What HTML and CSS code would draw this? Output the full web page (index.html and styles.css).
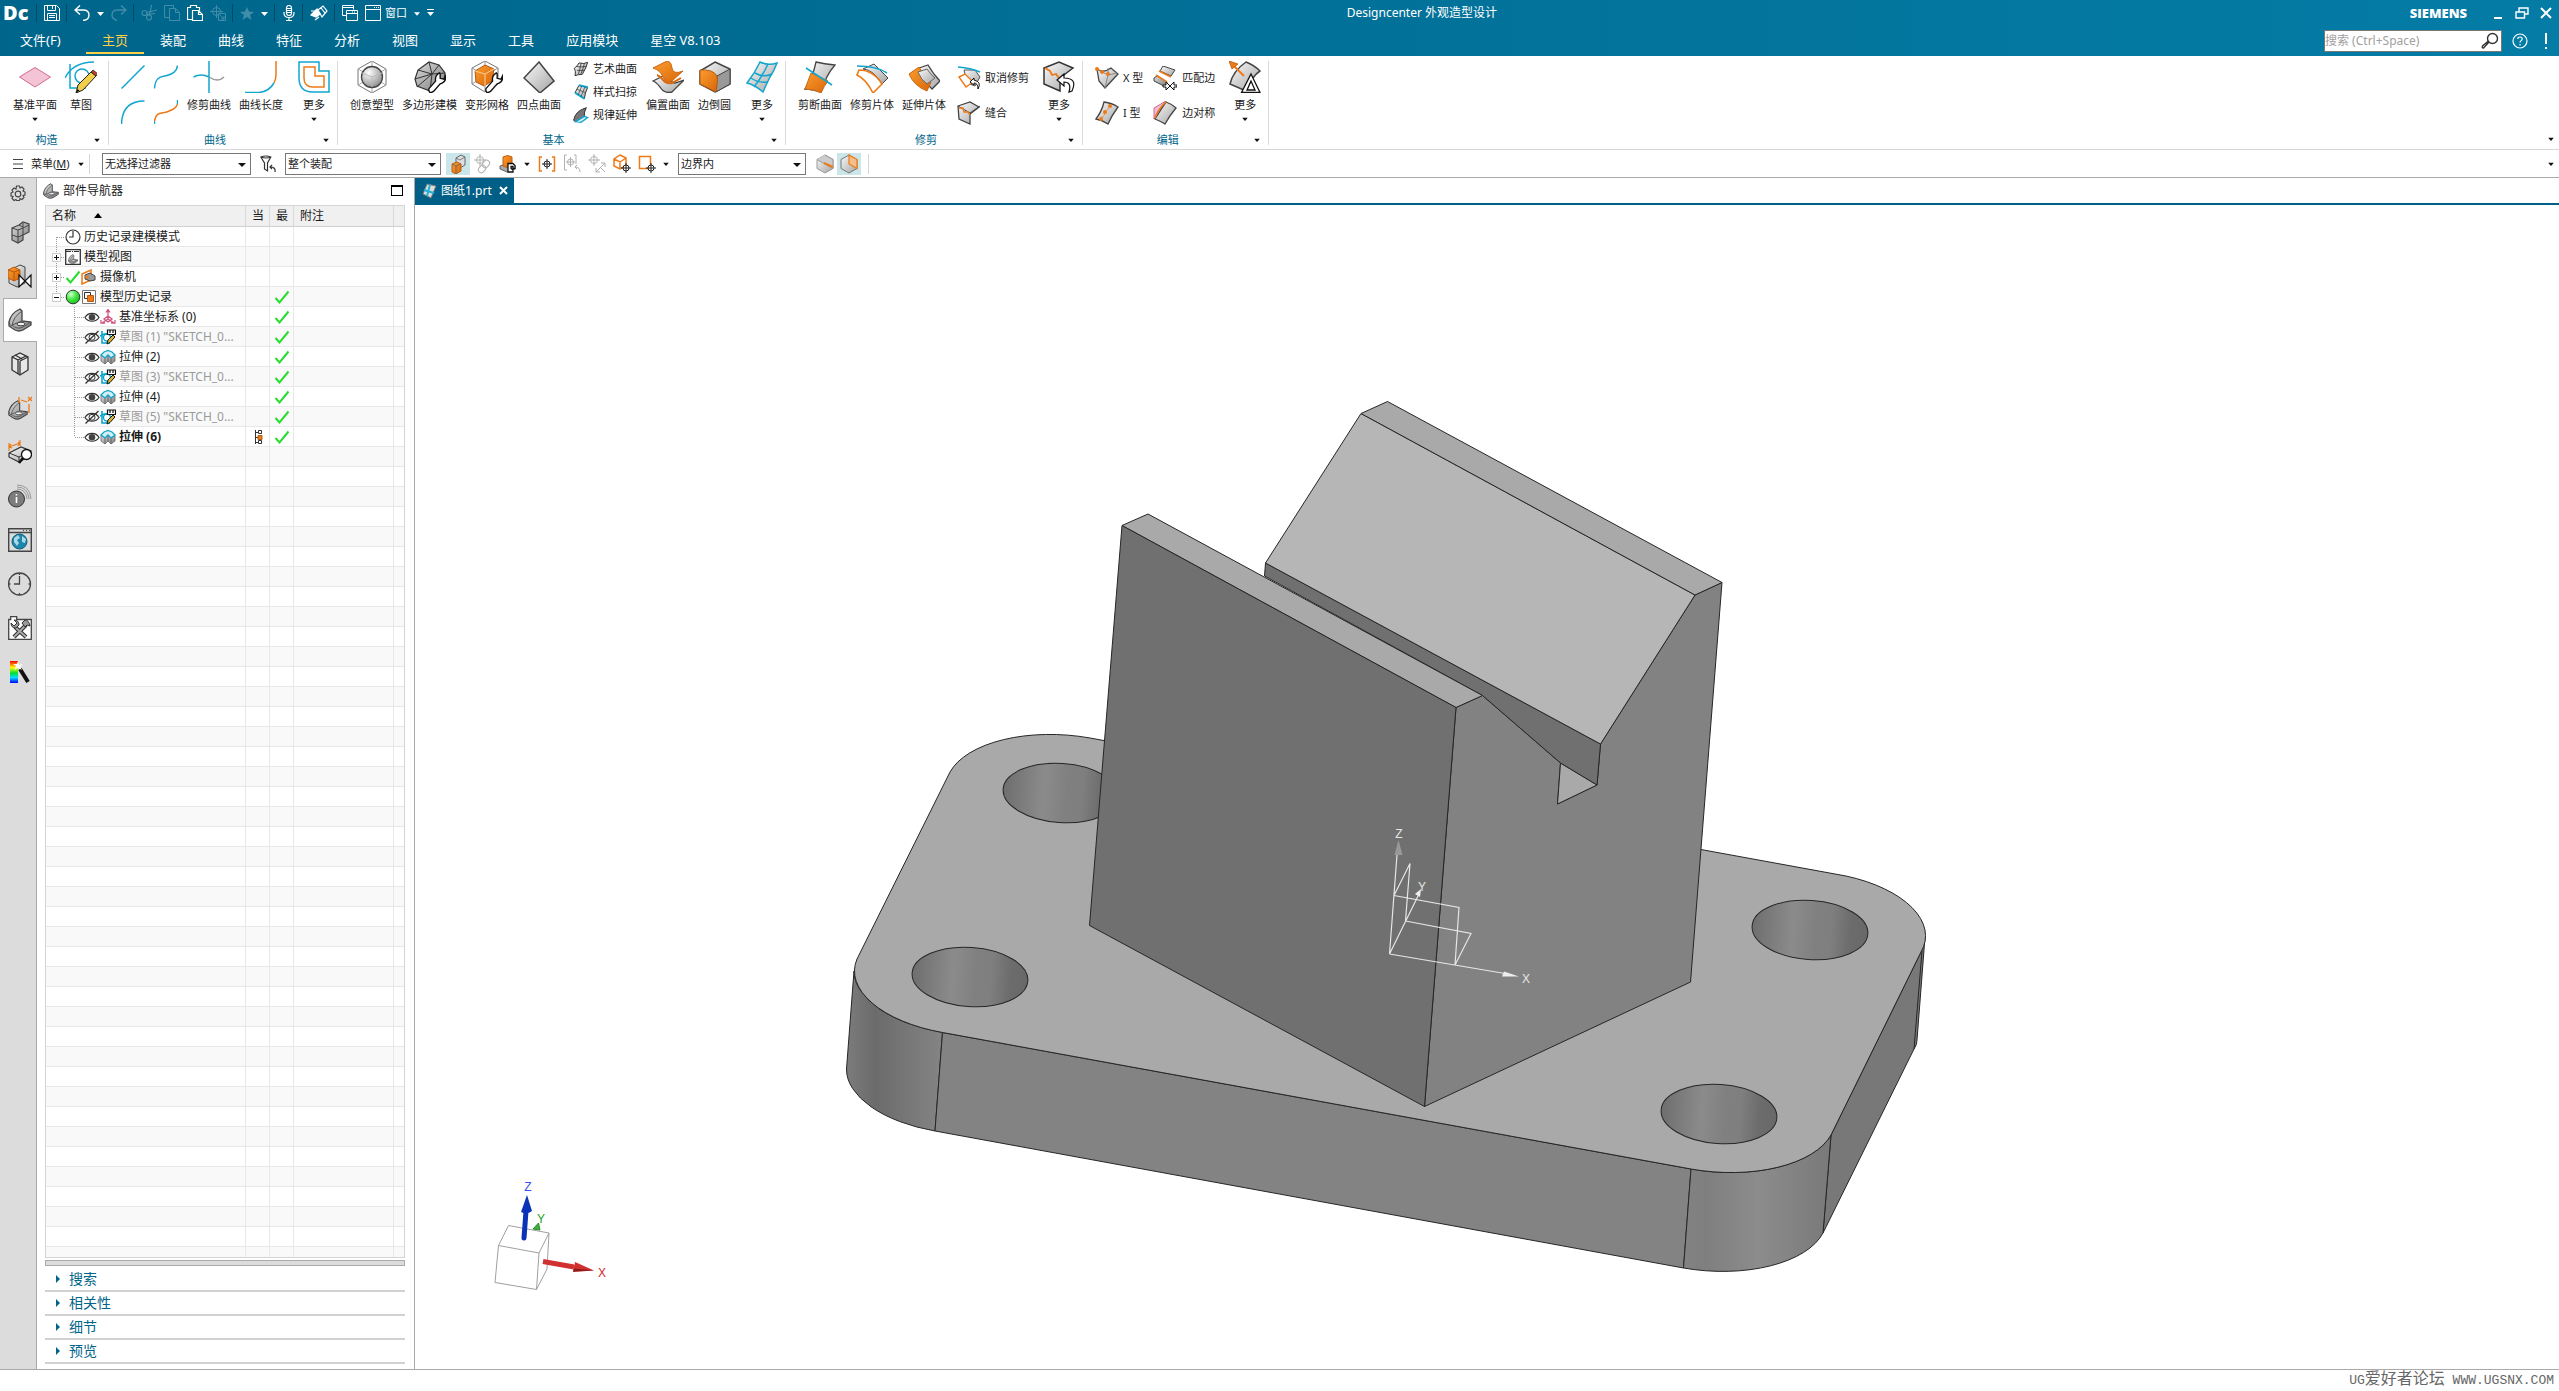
FILE: index.html
```html
<!DOCTYPE html>
<html lang="zh-CN">
<head>
<meta charset="utf-8">
<meta name="viewport" content="width=device-width, initial-scale=1">
<title>Designcenter 外观造型设计</title>
<link rel="stylesheet" href="styles.css">
</head>
<body>
<svg class="defs" width="0" height="0" aria-hidden="true">
  <defs>
    <linearGradient id="gray" x1="0" y1="0" x2="1" y2="1"><stop offset="0" stop-color="#fafafa"/><stop offset="1" stop-color="#a4a4a4"/></linearGradient>
    <linearGradient id="dark" x1="0" y1="0" x2="1" y2="1"><stop offset="0" stop-color="#dcdcdc"/><stop offset="1" stop-color="#7c7c7c"/></linearGradient>
    <linearGradient id="orange" x1="0" y1="0" x2="1" y2="1"><stop offset="0" stop-color="#fb9d2e"/><stop offset="1" stop-color="#d9660a"/></linearGradient>
    <radialGradient id="ball" cx=".35" cy=".3" r=".8"><stop offset="0" stop-color="#fff"/><stop offset="1" stop-color="#858585"/></radialGradient>
    <radialGradient id="green" cx=".35" cy=".3" r=".8"><stop offset="0" stop-color="#d4ffd4"/><stop offset=".5" stop-color="#3fe63f"/><stop offset="1" stop-color="#17b817"/></radialGradient>
    <linearGradient id="rainbow" x1="0" y1="0" x2="0" y2="1"><stop offset="0" stop-color="#f00"/><stop offset=".3" stop-color="#ff0"/><stop offset=".55" stop-color="#0d3"/><stop offset=".75" stop-color="#0df"/><stop offset="1" stop-color="#00f"/></linearGradient>
  </defs>
  <symbol id="caret" viewBox="0 0 7 5"><path d="M0 1h7L3.500 5z" fill="currentColor"/></symbol>
  <symbol id="check" viewBox="0 0 16 16"><path d="M1.500 9l4 4.500L14.500 2.500" fill="none" stroke="#27dd2d" stroke-width="2"/></symbol>
  <symbol id="eye" viewBox="0 0 16 16"><path d="M1 8.500C4 3 12 3 15 8.500C12 13.500 4 13.500 1 8.500z" fill="#fff" stroke="#333" stroke-width="1.200"/><circle cx="8" cy="8.300" r="3.300" fill="#444"/></symbol>
  <symbol id="eye-off" viewBox="0 0 16 16"><path d="M1 8.500C4 3 12 3 15 8.500C12 13.500 4 13.500 1 8.500z" fill="none" stroke="#333" stroke-width="1.200"/><circle cx="8" cy="8.300" r="3" fill="none" stroke="#333"/><path d="M1.500 14.500L14.500 2" stroke="#333" stroke-width="1.300"/></symbol>
  <symbol id="sketch" viewBox="0 0 16 16"><path d="M2 2v12h8M0 7q5-3 8-2" fill="none" stroke="#00a3cc" stroke-width="1.500"/><circle cx="7" cy="8.500" r="3.500" fill="none" stroke="#00a3cc" stroke-width="1.300"/><path d="M7.500 1h8v4.500h-8zM10 1v3M13 1v3" fill="#fff" stroke="#111" stroke-width="1.200"/><path d="M7 15l1-4 5-5 2 2-5 5.500z" fill="#d8b53a" stroke="#111"/></symbol>
  <symbol id="extrude" viewBox="0 0 16 16"><path d="M1 6l4 3 3-3 3 3 4-3v6l-4 3-3-3-3 3-4-3z" fill="url(#dark)" stroke="#666" stroke-width=".8"/><path d="M1 6l3-3 4-1.500L12 3l3 3-4 3-3-3-3 3z" fill="#d3eef4" stroke="#0fa5c8" stroke-width="1.300"/><path d="M5 9.500V15M11 9.500V15M8 7v5" stroke="#666"/></symbol>
  <symbol id="part" viewBox="0 0 24 24"><path d="M1 18V14Q3 5 12 1l2 2v10l9 1v3l-8 5q-4 2-8 0z" fill="url(#dark)" stroke="#444" stroke-width="1.300"/><path d="M1 14q0 3 3 4 1-9 10-15M4 17l10-4M4 17q5 5 11 2l8-5" fill="none" stroke="#555"/><ellipse cx="13" cy="16" rx="4" ry="1.800" fill="#f0f0f0" stroke="#444"/></symbol>
  <symbol id="node-plus" viewBox="0 0 18 20"><path d="M9.500 0v20M14 10.500h4" stroke="#999" stroke-dasharray="1 1"/><path d="M5.500 6.500h8v8h-8z" fill="#fff" stroke="#ccc"/><path d="M7 10.500h5M9.500 8v5" stroke="#111"/></symbol>
  <symbol id="node-minus" viewBox="0 0 18 20"><path d="M9.500 0v6M14 10.500h4" stroke="#999" stroke-dasharray="1 1"/><path d="M5.500 6.500h8v8h-8z" fill="#fff" stroke="#ccc"/><path d="M7 10.500h5" stroke="#111"/></symbol>
  <symbol id="branch" viewBox="0 0 10 20"><path d="M.5 0v20M1 10.500h9" stroke="#999" stroke-dasharray="1 1"/></symbol>
  <symbol id="branch-end" viewBox="0 0 10 20"><path d="M.5 0v10M1 10.500h9" stroke="#999" stroke-dasharray="1 1"/></symbol>
  <symbol id="wrench" viewBox="0 0 20 24"><path d="M2 19L9 11q-1-6 4-9l1 1v5l4 1 2-4q1 7-6 9l-7 8q-4 3-5 0-1-2 0-3z" fill="#fff" stroke="#111" stroke-width="1.500"/></symbol>
</svg>

<header class="app-header">
  <div class="title-row">
    <div class="quick">
      <span class="logo">Dc</span>
      <i class="sep"></i>
      <button aria-label="保存"><svg width="16" height="16" viewBox="0 0 16 16" fill="none" stroke="#fff"><path d="M.5.5h12l3 3v12h-15zM3.500.5v5h8v-5M8.500 1v3M3.500 15.500v-7h9v7M5 10.500h6M5 12.500h6"/></svg></button>
      <i class="sep"></i>
      <button aria-label="撤消"><svg width="16" height="16" viewBox="0 0 16 16" fill="none" stroke="#fff" stroke-width="1.400"><path d="M6 .5L1 5l5 4.500M1 5h8q6 0 6 5t-6 5.500"/></svg></button>
      <svg class="caret light" width="7" height="5"><use href="#caret"/></svg>
      <button aria-label="重做" class="dim"><svg width="16" height="16" viewBox="0 0 16 16" fill="none" stroke="#fff" stroke-width="1.400"><path d="M10 .5L15 5l-5 4.500M15 5H7q-6 0-6 5 0 4 5 5.500"/></svg></button>
      <i class="sep"></i>
      <button aria-label="剪切" class="dim"><svg width="16" height="16" viewBox="0 0 16 16" fill="none" stroke="#fff" stroke-width="1.200"><circle cx="3.500" cy="8" r="2.500"/><circle cx="8" cy="12.500" r="2.500"/><path d="M6 7.500l10-2.500M8.500 10l2-10M6 9.500l8-1"/></svg></button>
      <button aria-label="复制" class="dim"><svg width="16" height="16" viewBox="0 0 16 16" fill="none" stroke="#fff"><path d="M5.500 12.500h-5v-12h9v3M5.500 3.500h6l4 4v8h-10zM11.500 3.500v4h4"/></svg></button>
      <button aria-label="粘贴"><svg width="16" height="16" viewBox="0 0 16 16" fill="none" stroke="#fff" stroke-width="1.200"><path d="M5.500 14.500h-5v-12h3v-2h6v2h3v3M5.500 5.500h6l4 4v6h-10zM11.500 5.500v4h4"/></svg></button>
      <button aria-label="移动" class="dim"><svg width="16" height="16" viewBox="0 0 16 16" fill="none" stroke="#fff"><circle cx="6.500" cy="6.500" r="4"/><path d="M6.500 0v13M0 6.500h13M8.500 8.500h7v7h-7zM10 10l4 4v-3M14 14h-3"/></svg></button>
      <i class="sep"></i>
      <button aria-label="收藏" class="dim"><svg width="14" height="14" viewBox="0 0 14 14" fill="#fff"><path d="M7 1l2 4.500 5 .5-4 3 1.500 5L7 11l-4.500 3L4 9 0 6l5-.5z"/></svg></button>
      <svg class="caret light" width="7" height="5"><use href="#caret"/></svg>
      <i class="sep"></i>
      <button aria-label="语音"><svg width="14" height="16" viewBox="0 0 14 16" fill="none" stroke="#fff" stroke-width="1.200"><rect x="4.500" y=".5" width="5" height="10" rx="2.500"/><path d="M2 7v1q0 4.500 5 4.500T12 8V7M7 12.500V15M4 15.500h6M5 3.500h4M5 5.500h4M5 7.500h4"/></svg></button>
      <i class="sep"></i>
      <button aria-label="橡皮"><svg width="18" height="16" viewBox="0 0 18 16" fill="none" stroke="#fff" stroke-width="1.200"><path d="M8 5l5-4 4 5-5 6zM11 3l4 5M1 6h4M9 12l-4 3"/><path d="M1 10l6-6 3 5-4 3z" fill="#fff"/></svg></button>
      <i class="sep"></i>
      <button aria-label="切换窗口"><svg width="16" height="16" viewBox="0 0 16 16" fill="none" stroke="#fff"><path d="M4 10.500H.5v-10h11v4M.5 2.500h11M4.500 5.500h11v10h-11zM4.500 8.500h11"/><path d="M10 7h4" stroke-dasharray="1 1"/></svg></button>
      <button class="win-menu"><svg width="16" height="16" viewBox="0 0 16 16" fill="none" stroke="#fff"><path d="M.5.500h15v15h-15zM.5 4.500h15"/><path d="M9 2.500h5" stroke-dasharray="1 1"/></svg><span>窗口</span></button>
      <svg class="caret light" width="6" height="5"><use href="#caret"/></svg>
      <svg class="caret light" width="7" height="8" viewBox="0 0 7 8"><path d="M0 .5h7" stroke="#fff"/><path d="M0 3h7L3.500 7z" fill="#fff"/></svg>
    </div>
    <h1 class="doc-title">Designcenter 外观造型设计</h1>
    <div class="window-side">
      <strong class="brand">SIEMENS</strong>
      <div class="window-buttons">
        <button aria-label="最小化"><svg width="14" height="14" viewBox="0 0 14 14"><path d="M3 12h8" stroke="#fff" stroke-width="2"/></svg></button>
        <button aria-label="还原"><svg width="14" height="14" viewBox="0 0 14 14" fill="none" stroke="#fff" stroke-width="1.400"><path d="M4 6V2h9v6h-3M1 6h8.500v6H1z"/></svg></button>
        <button aria-label="关闭"><svg width="14" height="14" viewBox="0 0 14 14"><path d="M2 2l10 10M12 2L2 12" stroke="#fff" stroke-width="2"/></svg></button>
      </div>
    </div>
  </div>
  <div class="tab-row">
    <nav class="tabs">
      <a href="#" class="file">文件(F)</a><a href="#" class="active">主页</a><a href="#">装配</a><a href="#">曲线</a><a href="#">特征</a><a href="#">分析</a><a href="#">视图</a><a href="#">显示</a><a href="#">工具</a><a href="#">应用模块</a><a href="#">星空 V8.103</a>
    </nav>
    <div class="search-side">
      <div class="search">
        <input type="text" aria-label="搜索" placeholder="搜索 (Ctrl+Space)">
        <svg width="18" height="18" viewBox="0 0 18 18" fill="none" stroke="#333" stroke-width="1.400"><circle cx="11.500" cy="6.500" r="5"/><path d="M8 10l-5.500 6q-2 0-1-2L7.500 9" /></svg>
      </div>
      <button aria-label="帮助"><svg width="16" height="16" viewBox="0 0 16 16" fill="none" stroke="#fff" stroke-width="1.200"><circle cx="8" cy="8" r="7"/><path d="M5.800 6q0-2 2.200-2t2.200 2q0 1.200-1.200 1.800-1 .5-1 1.800M8 11v1.400"/></svg></button>
      <button aria-label="提醒"><svg width="16" height="18" viewBox="0 0 16 18"><path d="M8 1v11M8 15v2" stroke="#fff" stroke-width="2"/></svg></button>
    </div>
  </div>
</header>

<section class="ribbon" aria-label="主页">
  <div class="group g-build">
    <div class="items">
      <button class="big"><svg width="32" height="32" viewBox="0 0 32 32"><path d="M.5 16L16 6.500L31.500 16L16 26z" fill="#f5c3d6" stroke="#cf6c8e"/></svg><span>基准平面</span><svg class="caret" width="6" height="4"><use href="#caret"/></svg></button>
      <button class="big short"><svg width="32" height="32" viewBox="0 0 32 32"><g fill="none" stroke="#12a6cf" stroke-width="1.500"><path d="M5 3v24h16M0 17Q8 1 29 1"/><circle cx="17" cy="15" r="7"/></g><path d="M11 32l2-8L26 11l5 4-13 14z" fill="#f2cf4a" stroke="#222"/><path d="M26 11l2-2 5 4-2 2z" fill="#c63b2b" stroke="#222" stroke-width=".8"/><path d="M11 32l1.500-4 2 1.500z" fill="#111"/></svg><span>草图</span></button>
    </div>
    <footer><span>构造</span><svg class="caret" width="6" height="4"><use href="#caret"/></svg></footer>
  </div>
  <div class="group g-curve">
    <div class="items">
      <div class="curves">
        <button aria-label="直线"><svg width="24" height="24" viewBox="0 0 24 24"><path d="M.5 23.500l23-23" stroke="#12a6cf" stroke-width="1.500"/></svg></button>
        <button aria-label="样条"><svg width="24" height="24" viewBox="0 0 24 24"><path d="M.5 23.500C1 11 8 12 13 10.500S23 7 23.500.5" fill="none" stroke="#12a6cf" stroke-width="1.500"/></svg></button>
        <button aria-label="圆弧"><svg width="24" height="24" viewBox="0 0 24 24"><path d="M.5 24Q1 1 23.500 1" fill="none" stroke="#12a6cf" stroke-width="1.500"/></svg></button>
        <button aria-label="桥接"><svg width="24" height="24" viewBox="0 0 24 24" fill="none" stroke="#12a6cf" stroke-width="1.500"><path d="M.5 24V21M23.500 0v4"/><path d="M.5 21C2 11 8 14 14 11.500S22 8 23.500 4" stroke="#ee7a17"/></svg></button>
      </div>
      <button class="big"><svg width="32" height="32" viewBox="0 0 32 32" fill="none" stroke-width="1.500"><path d="M16 0v32M.5 16Q8 12 16 16" stroke="#12a6cf"/><path d="M16 16q9 6 15 0" stroke="#999"/></svg><span>修剪曲线</span></button>
      <button class="big"><svg width="32" height="32" viewBox="0 0 32 32" fill="none" stroke-width="1.500"><path d="M31 0v14q0 4-2 8" stroke="#ee7a17"/><path d="M0 31.500h14q10-1 15-9.500" stroke="#12a6cf"/></svg><span>曲线长度</span></button>
      <button class="big more"><svg width="32" height="32" viewBox="0 0 32 32" fill="none" stroke-width="1.500"><path d="M1 1h20v9h10v21H15Q1 31 1 17z" stroke="#12a6cf"/><path d="M6 6h11v9h9v11H15q-9 0-9-9z" stroke="#ee7a17"/></svg><span>更多</span><svg class="caret" width="6" height="4"><use href="#caret"/></svg></button>
    </div>
    <footer><span>曲线</span><svg class="caret" width="6" height="4"><use href="#caret"/></svg></footer>
  </div>
  <div class="group g-base">
    <div class="items">
      <button class="big"><svg width="32" height="32" viewBox="0 0 32 32"><path d="M16 0l14 8v16l-14 8-14-8V8z" fill="#fff" stroke="#777"/><path d="M16 0v32M2 8l28 16M30 8L2 24" stroke="#aaa"/><circle cx="16" cy="16" r="10.500" fill="url(#ball)" stroke="#444" stroke-width="1.300"/><path d="M6 12l10 4 10-4M16 16v10" fill="none" stroke="#bbb"/></svg><span>创意塑型</span></button>
      <button class="big"><svg width="32" height="32" viewBox="0 0 32 32"><path d="M1 18L4 9 15 1l10 3 6 8-1 8-14 10-13-5z" fill="url(#dark)" stroke="#333" stroke-width="1.200"/><path d="M4 9l14 4L15 1M18 13L1 18M18 13L3 26M18 13l13-1M18 13l7-9M18 13l-2 17" fill="none" stroke="#333"/><svg x="13" y="10" width="19" height="22"><use href="#wrench"/></svg></svg><span>多边形建模</span></button>
      <button class="big"><svg width="32" height="32" viewBox="0 0 32 32"><path d="M14 0l13 7v16l-13 8-13-8V7z" fill="#fff" stroke="#777"/><path d="M14 0v31M1 7l26 16M27 7L1 23" stroke="#999"/><path d="M4 10l10-6 9 4-2 12-8 5-8-4z" fill="url(#orange)" stroke="#b65a10"/><path d="M4 10l10 3 9-5M14 13v12" fill="none" stroke="#ffd09a"/><svg x="13" y="10" width="19" height="22"><use href="#wrench"/></svg></svg><span>变形网格</span></button>
      <button class="big"><svg width="32" height="32" viewBox="0 0 32 32"><path d="M16 1l15 19-14 12L1 17z" fill="url(#gray)" stroke="#444" stroke-width="1.500"/></svg><span>四点曲面</span></button>
      <div class="list three">
        <button><svg width="16" height="16" viewBox="0 0 24 24"><path d="M2 11Q8 6 9 3q8 2 13-1-2 8-8 18-6 0-11 2 2-6-1-11z" fill="url(#gray)" stroke="#333" stroke-width="1.500"/><path d="M5 8q6 2 15 0M6 14l11 0M12 4Q10 14 8 20M17 4q-2 8-5 15" fill="none" stroke="#333" stroke-width="1.200"/></svg><span>艺术曲面</span></button>
        <button><svg width="16" height="16" viewBox="0 0 24 24"><path d="M3 13L9 2l13 3q-4 8-5 17l-14-9z" fill="url(#gray)" stroke="#333" stroke-width="1.500"/><path d="M9 2l13 3M3 13l14 9" stroke="#12a6cf" stroke-width="3"/><path d="M6 8l13 5M13 3L8 16M18 4l-6 15" stroke="#333"/></svg><span>样式扫掠</span></button>
        <button><svg width="16" height="16" viewBox="0 0 24 24"><path d="M1 20Q3 6 20 1q-4 7-3 13L4 22z" fill="#777" stroke="#333" stroke-width="1.500"/><path d="M4 22l13-8 5 2-10 7z" fill="#d5f0f7" stroke="#12a6cf" stroke-width="2"/></svg><span>规律延伸</span></button>
      </div>
      <button class="big"><svg width="32" height="32" viewBox="0 0 32 32"><path d="M1 20l12-6q6 8 10 8l9-3-12 12q-8 2-12-5-4-5-7-6z" fill="url(#gray)" stroke="#444" stroke-width="1.300"/><path d="M1 7L15 0q4 0 5 7t11 3L20 20q-6 3-9-4T1 7z" fill="url(#orange)" stroke="#c96a14"/><path d="M5 14q3 1 6 5t9 3l9-5" fill="none" stroke="#d9660a" stroke-width="2"/></svg><span>偏置曲面</span></button>
      <button class="big"><svg width="32" height="32" viewBox="0 0 32 32"><path d="M16 1l15 7v15l-15 8-15-8V10z" fill="url(#gray)" stroke="#444" stroke-width="1.500"/><path d="M18 15l13-7v15l-14 8z" fill="#999" stroke="#444"/><path d="M1 9q13-1 17 6 1 5-1 16L1 23z" fill="url(#orange)" stroke="#b65a10"/></svg><span>边倒圆</span></button>
      <button class="big more"><svg width="32" height="32" viewBox="0 0 32 32"><path d="M14 1q8 4 17 1-3 8-7 14-4 8-7 15Q9 24 1 22 9 12 14 1z" fill="url(#gray)" stroke="#12a6cf" stroke-width="1.500"/><path d="M22 3Q16 16 8 26M9 12q8 5 17 1M5 17q7 5 17 4" fill="none" stroke="#12a6cf" stroke-width="1.500"/></svg><span>更多</span><svg class="caret" width="6" height="4"><use href="#caret"/></svg></button>
    </div>
    <footer><span>基本</span><svg class="caret" width="6" height="4"><use href="#caret"/></svg></footer>
  </div>
  <div class="group g-trim">
    <div class="items">
      <button class="big"><svg width="32" height="32" viewBox="0 0 32 32"><path d="M12 1q8 2 19 3-9 10-14 27Q8 28 1 28 9 16 12 1z" fill="url(#gray)" stroke="#444" stroke-width="1.300"/><path d="M7 12l17 8q-4 5-7 12-7-4-16-4z" fill="url(#orange)" stroke="#c96a14"/><path d="M2 7l26 17" stroke="#12a6cf" stroke-width="1.500"/></svg><span>剪断曲面</span></button>
      <button class="big"><svg width="32" height="32" viewBox="0 0 32 32"><path d="M18 3l14 14-6 6Q18 9 7 8z" fill="url(#gray)" stroke="#444"/><path d="M3 9q14 0 23 14l-9 9Q10 18 1 14z" fill="#fff" stroke="#ee7a17" stroke-width="1.600"/><path d="M1 5q20 0 30 7" fill="none" stroke="#12a6cf" stroke-width="1.600"/></svg><span>修剪片体</span></button>
      <button class="big"><svg width="32" height="32" viewBox="0 0 32 32"><path d="M11 7l9-3q6 10 12 16l-8 8q-9-8-13-21z" fill="url(#gray)" stroke="#444" stroke-width="1.300"/><path d="M1 13l10-7q4 9 12 15l-4 9Q6 25 1 13z" fill="url(#orange)" stroke="#c96a14"/><path d="M10 11l9-3q4 6 8 9l-8 6q-6-4-9-12z" fill="url(#gray)" stroke="#666"/></svg><span>延伸片体</span></button>
      <div class="list two">
        <button><svg width="24" height="24" viewBox="0 0 24 24"><path d="M7 4l11 0 5 7-5 9-8-3z" fill="url(#gray)" stroke="#555"/><path d="M2 11l6-3 8 8-7 5z" fill="#fff" stroke="#ee7a17" stroke-width="1.400"/><path d="M1 1q13 1 22 5" fill="none" stroke="#12a6cf" stroke-width="1.600"/><path d="M17 12l-4 4 4 3v-2q4 0 4 6 4-7-4-9z" fill="#fff" stroke="#111"/></svg><span>取消修剪</span></button>
        <button><svg width="24" height="24" viewBox="0 0 24 24"><path d="M1 5l12-4 9 5-9 7v10L2 18z" fill="url(#gray)" stroke="#444" stroke-width="1.300"/><path d="M1 5l12 7 10-7" fill="none" stroke="#444"/><path d="M2 7l4 0 1 4 4 0 2 3" fill="none" stroke="#ee7a17" stroke-width="1.500"/></svg><span>缝合</span></button>
      </div>
      <button class="big more"><svg width="32" height="32" viewBox="0 0 32 32"><path d="M1 7l15-6 14 6-13 10v13L1 23z" fill="url(#gray)" stroke="#333" stroke-width="1.500"/><path d="M2 7l5 3 2 4 4-1 3 4" fill="none" stroke="#ee7a17" stroke-width="1.800"/><path d="M21 13l-7 6 7 6v-4q8 0 5 10l3-1q6-13-8-13z" fill="#fff" stroke="#111" stroke-width="1.200"/></svg><span>更多</span><svg class="caret" width="6" height="4"><use href="#caret"/></svg></button>
    </div>
    <footer><span>修剪</span><svg class="caret" width="6" height="4"><use href="#caret"/></svg></footer>
  </div>
  <div class="group g-edit">
    <div class="items">
      <div class="list two">
        <button><svg width="24" height="24" viewBox="0 0 24 24"><path d="M2 3q6 5 14-1l7 6-13 14L4 15z" fill="url(#gray)" stroke="#444" stroke-width="1.300"/><path d="M2 3l11 6V2M13 9l9-2M13 9l-3 13" fill="none" stroke="#888"/><g fill="#ee7a17"><circle cx="2" cy="3" r="2"/><circle cx="7" cy="6" r="2"/><circle cx="13" cy="8" r="2"/></g></svg><span>X 型</span></button>
        <button><svg width="24" height="24" viewBox="0 0 24 24"><path d="M9 1q8 1 14 5-6 8-10 17Q7 19 1 18 7 10 9 1z" fill="url(#gray)" stroke="#444" stroke-width="1.300"/><path d="M15 5L7 17" stroke="#ee7a17" stroke-dasharray="2 1"/><g fill="#ee7a17"><circle cx="15" cy="5" r="2"/><circle cx="10" cy="11" r="2"/><circle cx="6" cy="18" r="2"/></g></svg><span>I 型</span></button>
      </div>
      <div class="list two wide">
        <button><svg width="24" height="24" viewBox="0 0 24 24"><path d="M10 0l12 4-4 6-11-5z" fill="url(#gray)" stroke="#444"/><path d="M1 12l3-2 10 6-1 5-12-6z" fill="url(#dark)" stroke="#444"/><path d="M6 5l12 6M3 9l11 7" stroke="#ee7a17" stroke-width="1.600"/><path d="M10 19h3v-3l4 4-4 4v-3h-3zM24 19h-3v-3l-4 4 4 4v-3h3z" fill="#fff" stroke="#111"/></svg><span>匹配边</span></button>
        <button><svg width="24" height="24" viewBox="0 0 24 24"><path d="M1 7L13 0 5 10 1 18z" fill="#f5b9d0" stroke="#cf6c8e"/><path d="M13 1q6 2 10 6-6 7-11 16-5-3-10-5Q8 8 13 1z" fill="url(#gray)" stroke="#444" stroke-width="1.300"/><path d="M13 1Q6 7 2 17" fill="none" stroke="#ee7a17" stroke-width="1.600"/></svg><span>边对称</span></button>
      </div>
      <button class="big more"><svg width="32" height="32" viewBox="0 0 32 32"><path d="M17 1q8 3 14 9-8 5-14 20Q8 26 1 23 4 10 17 1z" fill="url(#gray)" stroke="#444" stroke-width="1.500"/><path d="M15 15L5 5" stroke="#ee7a17" stroke-width="2"/><path d="M0 0l9 3-6 5z" fill="#ee7a17" stroke="#b65a10" stroke-width=".8"/><path d="M22 13l9 18.500H12.500zM22 20l-4 9h8z" fill="#fff" stroke="#111" stroke-width="1.300"/></svg><span>更多</span><svg class="caret" width="6" height="4"><use href="#caret"/></svg></button>
    </div>
    <footer><span>编辑</span><svg class="caret" width="6" height="4"><use href="#caret"/></svg></footer>
  </div>
  <svg class="caret ribbon-end" width="6" height="4"><use href="#caret"/></svg>
</section>

<div class="toolbar">
  <button class="menu"><svg width="10" height="12" viewBox="0 0 10 12"><path d="M0 1.500h10M0 6h10M0 10.500h10" stroke="#444"/></svg><span>菜单(<u>M</u>)</span><svg class="caret" width="6" height="4"><use href="#caret"/></svg></button>
  <i class="vsep"></i>
  <span class="select s1"><select aria-label="类型过滤器"><option>无选择过滤器</option></select></span>
  <button class="funnel" aria-label="重置过滤器"><svg width="16" height="18" viewBox="0 0 16 18" fill="none" stroke="#333" stroke-width="1.200"><path d="M.8 2q5-2 10 0L7.500 8v8l-3-2V8zM1 2q5 2 10 0M15 17q1-5-5-5M12 10l-2 2 2 2"/></svg></button>
  <span class="select s2"><select aria-label="选择范围"><option>整个装配</option></select></span>
  <button class="tool on first" aria-label="常规选择"><svg width="18" height="20" viewBox="0 0 18 20"><path d="M7 4l5-3 4 2v8l-5 3-4-2z" fill="#ddd" stroke="#666"/><path d="M3 10l5-2 4 2v7l-5 3-4-2z" fill="url(#orange)" stroke="#c05f10"/><path d="M3 10l4 2 5-2M7 12v8M7 4l4 2 5-3" fill="none" stroke="#666" stroke-width=".8"/></svg></button>
  <button class="tool off" aria-label="链接"><svg width="18" height="20" viewBox="0 0 18 20" fill="none" stroke="#555"><circle cx="6" cy="6" r="3.500"/><path d="M6 0v12M0 6h12"/><rect x="9" y="6" width="6" height="8" rx="3" transform="rotate(40 12 10)"/><rect x="5" y="11" width="6" height="8" rx="3" transform="rotate(40 8 15)"/></svg></button>
  <button class="tool" aria-label="高亮"><svg width="18" height="20" viewBox="0 0 18 20"><path d="M1 12l8-3 7 3v3l-8 3-7-3z" fill="#aaa" stroke="#666"/><path d="M4 3q5-3 9 0v9q-5 3-9 0z" fill="url(#orange)" stroke="#c05f10"/><path d="M9 9.500h5l2 2v3h-2v-2h-2v2l2 1.500v2H9z" fill="#fff" stroke="#111" stroke-width="1.300"/></svg></button>
  <svg class="caret" width="6" height="4"><use href="#caret"/></svg>
  <button class="tool" aria-label="捕捉"><svg width="18" height="20" viewBox="0 0 18 20" fill="none"><path d="M4 3H1.500v14H4M14 3h2.500v14H14" stroke="#ee7a17" stroke-width="1.500"/><g stroke="#222"><circle cx="9" cy="10" r="3"/><path d="M9 5v10M4 10h10"/></g></svg></button>
  <button class="tool off" aria-label="重置捕捉"><svg width="18" height="20" viewBox="0 0 18 20" fill="none" stroke="#555"><path d="M4 1H1.500v15H4M11 1h2v9M17 18q0-5-5-5l2-2M12 13l2 2"/><circle cx="7.500" cy="8" r="3"/><path d="M7.500 3v10M3 8h9"/></svg></button>
  <button class="tool off" aria-label="移动"><svg width="18" height="20" viewBox="0 0 18 20" fill="none" stroke="#555"><circle cx="6" cy="6" r="3.500"/><path d="M6 0v12M0 6h12M8 18l9-9M17 13V9h-4M8 14v4h4M12 13l5 5"/></svg></button>
  <button class="tool" aria-label="体"><svg width="18" height="20" viewBox="0 0 18 20" fill="none"><path d="M7 1l6 3v7l-6 4-6-3V5zM1 5l6 3 6-4M7 8v7" stroke="#ee7a17" stroke-width="1.500"/><g stroke="#222"><circle cx="13" cy="14" r="3" fill="#fff"/><path d="M13 9v10M8 14h10"/></g></svg></button>
  <button class="tool" aria-label="矩形"><svg width="18" height="20" viewBox="0 0 18 20" fill="none"><path d="M1.500 2.500h11v12h-11z" stroke="#ee7a17" stroke-width="1.500"/><g stroke="#222"><circle cx="13" cy="14" r="3" fill="#fff"/><path d="M13 9v10M8 14h10"/></g></svg></button>
  <svg class="caret" width="6" height="4"><use href="#caret"/></svg>
  <span class="select s3"><select aria-label="选择边界"><option>边界内</option></select></span>
  <button class="tool" aria-label="着色"><svg width="18" height="20" viewBox="0 0 18 20"><path d="M9 1l8 4.500v9L9 19l-8-4.500v-9z" fill="url(#gray)" stroke="#999"/><path d="M9 1l8 4.500v9L9 10 1 5.500" fill="#ccc" stroke="#999"/><path d="M8 9l9 4" stroke="#ee7a17" stroke-width="2"/></svg></button>
  <button class="tool on" aria-label="透明"><svg width="18" height="20" viewBox="0 0 18 20"><path d="M9 1l8 4.500v9L9 19l-8-4.500v-9z" fill="url(#gray)" stroke="#777"/><path d="M9 1l8 4.500v9L9 10z" fill="#f3bd8c" stroke="#ee7a17" stroke-width="1.200"/></svg></button>
  <i class="vsep end"></i>
  <svg class="caret last" width="6" height="4"><use href="#caret"/></svg>
</div>

<main class="workspace">
  <nav class="rail" aria-label="资源条">
    <button class="gear" aria-label="设置"><svg width="18" height="18" viewBox="0 0 18 18" fill="none" stroke="#444" stroke-width="1.200"><path d="M7.500 1h3l.5 2 2-1 2 2-1 2 2 1v3l-2 .5 1 2-2 2-2-1-.5 2h-3L7 14.500l-2 1-2-2 1-2-2-.5V8l2-1-1-2 2-2 2 1z"/><circle cx="9" cy="9" r="2.800"/></svg></button>
    <button aria-label="装配导航器"><svg width="24" height="24" viewBox="0 0 24 24"><path d="M4 8l7-3 4-3 6 2v8l-6 3v5l-5 3-6-3z" fill="url(#dark)" stroke="#444" stroke-width="1.200"/><path d="M4 8l6 2 5-2V3M10 10v13M15 8l6-3M4 15l6 2 5-2V8M11 5l4 2" fill="none" stroke="#444"/></svg></button>
    <button aria-label="约束导航器"><svg width="24" height="24" viewBox="0 0 24 24"><path d="M6 4l6-3 5 2v16l-8 4-8-4V8z" fill="url(#gray)" stroke="#444"/><path d="M0 6l6-3 6 3v8l-6 3-6-3z" fill="url(#orange)" stroke="#b65a10"/><path d="M0 6l6 2 6-2M6 8v9" fill="none" stroke="#b65a10"/><path d="M11 11l12 12V11L11 23z" fill="#fff" stroke="#111" stroke-width="1.200"/></svg></button>
    <button class="current" aria-label="部件导航器"><svg width="24" height="24"><use href="#part"/></svg></button>
    <button aria-label="重用库"><svg width="24" height="24" viewBox="0 0 24 24"><path d="M4 5l8-4 8 4v13l-8 5-8-5z" fill="#e8e8e8" stroke="#333" stroke-width="1.300"/><path d="M4 5l6 3v14M10 8l8-4M12 9v13M12 9l8-4M7 3l7 4" fill="none" stroke="#333" stroke-width="1.300"/></svg></button>
    <button aria-label="MBD 导航器"><svg width="24" height="24" viewBox="0 0 24 24"><svg y="4" width="20" height="20"><use href="#part"/></svg><path d="M11 1v6M13 4l6 2M20 1l4 4M24 1l-4 4M21 8v9" stroke="#ee7a17" stroke-width="1.300"/></svg></button>
    <button aria-label="视图导航"><svg width="24" height="24" viewBox="0 0 24 24"><path d="M1 13l12-6 10 4v4l-12 7-10-5z" fill="url(#gray)" stroke="#333" stroke-width="1.200"/><path d="M1 13l10 4 12-6M11 17v5" fill="none" stroke="#333"/><path d="M1 3v8M12 0v6M1 7l11-4M3 4L1 7l3 1M10 2l2 1-2 3" fill="none" stroke="#ee7a17" stroke-width="1.200"/><circle cx="18.500" cy="14.500" r="5" fill="#fff" stroke="#111" stroke-width="1.300"/><path d="M15 18l-4 5" stroke="#111" stroke-width="2.500"/></svg></button>
    <button aria-label="通知"><svg width="24" height="24" viewBox="0 0 24 24"><circle cx="8.500" cy="15" r="8" fill="#7c7c7c" stroke="#333"/><path d="M8.500 13v6M8.500 10v1.500" stroke="#fff" stroke-width="1.600"/><path d="M9 5q9 0 10 10M9 3q11 0 12 12M9 1q13 0 14 14" fill="none" stroke="#999"/></svg></button>
    <button aria-label="浏览器"><svg width="24" height="24" viewBox="0 0 24 24"><path d="M.7.700h22.600v22.600H.700zM.7 4.500h22.600" fill="none" stroke="#444" stroke-width="1.400"/><path d="M15 2.500h7" stroke="#444" stroke-dasharray="1 2"/><circle cx="11.500" cy="13.500" r="7.500" fill="#1d86ab" stroke="#0f5d78"/><path d="M6 10l4-3 2 3-3 2 2 3-2 3-3-4zM14 8l4 3-1 4-3-1z" fill="#a9d8e6"/></svg></button>
    <button aria-label="历史记录"><svg width="24" height="24" viewBox="0 0 24 24" fill="none" stroke="#444" stroke-width="1.300"><circle cx="11.500" cy="12" r="11"/><path d="M11.500 4v8H6M11.500 1v2M11.500 21v2M.5 12h2M20.500 12h2"/></svg></button>
    <button aria-label="工具"><svg width="24" height="24" viewBox="0 0 24 24"><path d="M.7 3.500h2v-3h6v3h14.600v20H.700z" fill="#fff" stroke="#444" stroke-width="1.300"/><path d="M6 21L18 9M18 21L7 11" stroke="#333" stroke-width="4"/><path d="M6 21L18 9M18 21L7 11" stroke="#aaa" stroke-width="1.800"/><path d="M3 7l3 3 3-3-3-3q5 0 5 5l-3 3q-5 0-5-5zM14 7l3-3q4 0 5 6l-3-1-2 2z" fill="#999" stroke="#333"/></svg></button>
    <button aria-label="角色"><svg width="24" height="24" viewBox="0 0 24 24"><path d="M2 1h8v22H2z" fill="url(#rainbow)"/><path d="M12 9l8 13" stroke="#111" stroke-width="4"/><path d="M10 1l1 4 4-1-3 3 2 3-4-2-4 2 2-4-3-2h4z" fill="#fff"/></svg></button>
  </nav>

  <aside class="panel">
    <header class="panel-title"><svg width="16" height="16"><use href="#part"/></svg><h2>部件导航器</h2><button aria-label="最大化"></button></header>
    <div class="tree">
      <table>
        <colgroup><col class="c-name"><col class="c-mark"><col class="c-mark"><col class="c-note"><col></colgroup>
        <thead><tr><th>名称<svg class="sort" width="8" height="5" viewBox="0 0 8 5"><path d="M0 5h8L4 0z"/></svg></th><th>当</th><th>最</th><th>附注</th><th></th></tr></thead>
        <tbody>
          <tr><td><div class="node"><svg width="18" height="20" viewBox="0 0 18 20"><path d="M9.500 10v10M10 10.500h8" stroke="#999" stroke-dasharray="1 1"/></svg><svg width="16" height="16" viewBox="0 0 16 16" fill="none" stroke="#333" stroke-width="1.200"><circle cx="8" cy="8" r="7"/><path d="M8 2v6H4"/></svg><span>历史记录建模模式</span></div></td><td></td><td></td><td></td><td></td></tr>
          <tr><td><div class="node"><svg width="18" height="20"><use href="#node-plus"/></svg><svg width="16" height="16" viewBox="0 0 16 16"><path d="M.7.700h14.600v14.600H.700z" fill="#fff" stroke="#333" stroke-width="1.300"/><path d="M1 2.500h14" stroke="#333" stroke-dasharray="5 1 1 1"/><svg x="3" y="5" width="10" height="10"><use href="#part"/></svg></svg><span>模型视图</span></div></td><td></td><td></td><td></td><td></td></tr>
          <tr><td><div class="node"><svg width="18" height="20"><use href="#node-plus"/></svg><svg width="16" height="16"><use href="#check"/></svg><svg width="16" height="16" viewBox="0 0 16 16"><path d="M1 5l9-4v10l-9 4z" fill="#fff" stroke="#ee7a17" stroke-width="1.500"/><path d="M4 6l5-2 5 3v4l-5 1-5-2z" fill="#999" stroke="#444"/><circle cx="6" cy="8" r="1.800" fill="#ee7a17"/></svg><span>摄像机</span></div></td><td></td><td></td><td></td><td></td></tr>
          <tr><td><div class="node"><svg width="18" height="20"><use href="#node-minus"/></svg><svg width="16" height="16" viewBox="0 0 16 16"><circle cx="8" cy="8" r="6.800" fill="url(#green)" stroke="#333"/></svg><svg width="16" height="16" viewBox="0 0 16 16"><path d="M1.500 1.500h13v13h-13z" fill="#fff" stroke="#777"/><path d="M3.500 3.500h6v6h-6z" fill="#fff" stroke="#333"/><path d="M6.500 6.500h6v6h-6z" fill="#ee7a17" stroke="#b65a10"/></svg><span>模型历史记录</span></div></td><td></td><td><svg width="16" height="16"><use href="#check"/></svg></td><td></td><td></td></tr>
          <tr><td><div class="node child"><svg width="10" height="20"><use href="#branch"/></svg><svg width="16" height="16"><use href="#eye"/></svg><svg width="16" height="16" viewBox="0 0 16 16" fill="none" stroke="#d2557f" stroke-width="1.300"><path d="M8 2v8L2 14M8 10l6 4M6 3.500L8 .5l2 3M4 10l4-3 4 3-4 3zM1 11v3h4M15 11v3h-4"/></svg><span>基准坐标系 (0)</span></div></td><td></td><td><svg width="16" height="16"><use href="#check"/></svg></td><td></td><td></td></tr>
          <tr class="hidden-item"><td><div class="node child"><svg width="10" height="20"><use href="#branch"/></svg><svg width="16" height="16"><use href="#eye-off"/></svg><svg width="16" height="16"><use href="#sketch"/></svg><span>草图 (1) "SKETCH_0...</span></div></td><td></td><td><svg width="16" height="16"><use href="#check"/></svg></td><td></td><td></td></tr>
          <tr><td><div class="node child"><svg width="10" height="20"><use href="#branch"/></svg><svg width="16" height="16"><use href="#eye"/></svg><svg width="16" height="16"><use href="#extrude"/></svg><span>拉伸 (2)</span></div></td><td></td><td><svg width="16" height="16"><use href="#check"/></svg></td><td></td><td></td></tr>
          <tr class="hidden-item"><td><div class="node child"><svg width="10" height="20"><use href="#branch"/></svg><svg width="16" height="16"><use href="#eye-off"/></svg><svg width="16" height="16"><use href="#sketch"/></svg><span>草图 (3) "SKETCH_0...</span></div></td><td></td><td><svg width="16" height="16"><use href="#check"/></svg></td><td></td><td></td></tr>
          <tr><td><div class="node child"><svg width="10" height="20"><use href="#branch"/></svg><svg width="16" height="16"><use href="#eye"/></svg><svg width="16" height="16"><use href="#extrude"/></svg><span>拉伸 (4)</span></div></td><td></td><td><svg width="16" height="16"><use href="#check"/></svg></td><td></td><td></td></tr>
          <tr class="hidden-item"><td><div class="node child"><svg width="10" height="20"><use href="#branch"/></svg><svg width="16" height="16"><use href="#eye-off"/></svg><svg width="16" height="16"><use href="#sketch"/></svg><span>草图 (5) "SKETCH_0...</span></div></td><td></td><td><svg width="16" height="16"><use href="#check"/></svg></td><td></td><td></td></tr>
          <tr class="work"><td><div class="node child"><svg width="10" height="20"><use href="#branch-end"/></svg><svg width="16" height="16"><use href="#eye"/></svg><svg width="16" height="16"><use href="#extrude"/></svg><span>拉伸 (6)</span></div></td><td><svg width="16" height="16" viewBox="0 0 16 16" fill="none" stroke="#333"><path d="M5.500 1v14M5.500 3.500h3M5.500 13.500h3M5.500 8.500h3M8.500 1.500h3v3h-3zM8.500 11.500h3v3h-3z"/><path d="M8 6.500h4v4H8z" fill="#ee7a17" stroke="#b65a10"/></svg></td><td><svg width="16" height="16"><use href="#check"/></svg></td><td></td><td></td></tr>
        </tbody>
      </table>
      <div class="blank-rows"></div>
    </div>
    <div class="splitter"></div>
    <div class="sections">
      <button aria-expanded="false">搜索</button>
      <button aria-expanded="false">相关性</button>
      <button aria-expanded="false">细节</button>
      <button aria-expanded="false">预览</button>
    </div>
  </aside>

  <section class="viewport">
    <div class="doc-tabs">
      <button class="doc-tab"><svg width="16" height="16" viewBox="0 0 16 16"><path d="M5 1l9 2-5 12-8-4z" fill="#ddd" stroke="#777"/><path d="M8 1.500L5 13M2 7l10 3" stroke="#22b1d6" stroke-width="2"/></svg><span>图纸1.prt</span><svg width="9" height="9" viewBox="0 0 9 9"><path d="M1 1l7 7M8 1L1 8" stroke="#fff" stroke-width="2"/></svg></button>
    </div>
    <svg class="scene" viewBox="415 206 2144 1164" role="img" aria-label="三维模型">
      <defs>
        <linearGradient id="hole"><stop offset="0" stop-color="#6e6e6e"/><stop offset=".35" stop-color="#8b8b8b"/><stop offset=".55" stop-color="#808080"/><stop offset=".68" stop-color="#7f7f7f"/><stop offset=".85" stop-color="#6c6c6c"/><stop offset="1" stop-color="#686868"/></linearGradient>
        <linearGradient id="cornerL"><stop offset="0" stop-color="#7c7c7c"/><stop offset=".3" stop-color="#6b6b6b"/><stop offset=".6" stop-color="#767676"/><stop offset="1" stop-color="#848484"/></linearGradient>
        <linearGradient id="cornerR"><stop offset="0" stop-color="#828282"/><stop offset=".15" stop-color="#7f7f7f"/><stop offset=".5" stop-color="#8c8c8c"/><stop offset="1" stop-color="#797979"/></linearGradient>
      </defs>
      <g stroke="#262626" stroke-width="1" stroke-linejoin="round">
        <path d="M854 972L846.500 1070A116 58.500 4 0 0 935 1132L942.500 1033.500A116 58.500 4 0 1 854 972z" fill="url(#cornerL)"/>
        <path d="M942.500 1033.500L1691 1170L1683.500 1269L935 1132z" fill="#838383"/>
        <path d="M1925 938L1917 1041Q1917 1046 1914 1050L1823 1234L1831 1136L1921 953z" fill="#787878"/>
        <path d="M1922 952L1914 1050" fill="none"/>
        <path d="M1691 1170A116 58.500 4 0 0 1831 1136L1823 1234A116 58.500 4 0 1 1683.500 1269z" fill="url(#cornerR)"/>
        <path d="M942.500 1033.500A116 58.500 4 0 1 857 960L950 773A116 58.500 4 0 1 1090 739L1846 877A115 58.500 4 0 1 1921 953L1831 1136A116 58.500 4 0 1 1691 1170z" fill="#a9a9a9"/>
        <g fill="url(#hole)">
          <ellipse cx="1061" cy="794" rx="58" ry="29.500" transform="rotate(4 1061 794)"/>
          <ellipse cx="970" cy="978" rx="58" ry="29.500" transform="rotate(4 970 978)"/>
          <ellipse cx="1810" cy="931" rx="58" ry="29.500" transform="rotate(4 1810 931)"/>
          <ellipse cx="1719" cy="1115" rx="58" ry="29.500" transform="rotate(4 1719 1115)"/>
        </g>
        <path d="M1456 708.500L1482.500 696.500L1560.500 764L1557.500 805L1597 786L1600.500 745L1695 596L1722 583.500L1690.500 983L1424.500 1107.500z" fill="#828282"/>
        <path d="M1560.500 764L1597 786L1557.500 805z" fill="#a9a9a9"/>
        <path d="M1264.500 577L1265.500 564L1600.500 745L1597 786L1560.500 764L1482.500 696.500z" fill="#707070"/>
        <path d="M1361 414.500L1695 596L1600.500 745L1265.500 564z" fill="#b6b6b6"/>
        <path d="M1361 414.500L1387.500 402.500L1722 583.500L1695 596z" fill="#a9a9a9"/>
        <path d="M1122 526.500L1148 515L1482.500 696.500L1456 708.500z" fill="#a9a9a9"/>
        <path d="M1122 526.500L1456 708.500L1424.500 1107.500L1089.500 926.500z" fill="#707070"/>
      </g>
      <g fill="none" stroke="#e6e6e6" stroke-width="1.200">
        <path d="M1389.500 955L1397 856M1389.500 955L1508 975M1389.500 955L1419 895M1394 896.500L1459 908.500L1455 966M1405.500 922L1471 934.500L1455 966M1394 896.500L1410 864.500L1405.500 922"/>
        <path d="M1398.500 841l4 15h-8z" fill="#999" stroke="none"/>
        <path d="M1519 977.500l-15-5 -2 5z" fill="#eee" stroke="none"/>
        <path d="M1421 890l-1 8-5-3z" fill="#eee" stroke="none"/>
      </g>
      <g class="axis-label light-label">
        <text x="1399" y="839">Z</text><text x="1422" y="892">Y</text><text x="1526" y="984">X</text>
      </g>
      <path d="M498.500 1246.500L508.500 1226.500L549 1234L539 1254zM498.500 1246.500L495 1283.500L536.500 1290.500L539 1254M549 1234L547 1270L536.500 1290.500" fill="none" stroke="#a0a0a0"/>
      <path d="M524 1239L526 1212" stroke="#0a33b8" stroke-width="5" stroke-linecap="round"/><path d="M527 1196l5 16q-5 4-11 1z" fill="#0a33b8"/>
      <path d="M538.500 1224l1.500 7-7-1z" fill="#3db03d" stroke="#2a8f2a"/>
      <path d="M543 1262.500L574 1268" stroke="#d03030" stroke-width="5"/><path d="M594 1271.500l-19-8.500-2 10z" fill="#d03030"/><path d="M594 1271.500l-21 1 1-3z" fill="#8c1c1c"/>
      <g class="axis-label">
        <text x="528" y="1192" fill="#3a50f0">Z</text><text x="541" y="1224" fill="#22a022">Y</text><text x="602" y="1278" fill="#cf2a2a">X</text>
      </g>
    </svg>
  </section>
</main>

<footer class="status"><span>UG<b>爱好者论坛</b> WWW.UGSNX.COM</span></footer>
</body>
</html>
```
FILE: styles.css
```css
* { box-sizing: border-box; }

body {
  margin: 0;
  min-height: 100vh;
  display: flex;
  flex-direction: column;
  background: #fff;
  color: #1a1a1a;
  font: 11px/16px "Noto Sans", "Noto Sans CJK SC", sans-serif;
}

button {
  display: flex;
  align-items: center;
  padding: 0;
  border: 0;
  background: none;
  color: inherit;
  font: inherit;
  white-space: nowrap;
}

svg { display: block; flex: none; }
.defs { position: absolute; }
.caret { color: #111; }
.caret.light { color: #fff; }

/* Header */
.app-header {
  height: 56px;
  background: linear-gradient(90deg, #00658a, #047ca6);
  color: #fff;
}

.title-row { display: flex; height: 26px; align-items: center; }

.quick { display: flex; align-items: center; gap: 7px; padding-left: 3px; }
.logo { width: 27px; font: 800 20px/26px "Open Sans", "Noto Sans", sans-serif; }
.sep { width: 1px; height: 18px; margin-left: -1px; background: #004a66; }
.dim { opacity: .25; }
.win-menu { gap: 4px; }

.doc-title { flex: 1; margin: 0; font-size: 12px; font-weight: 400; text-align: center; }

.window-side { display: flex; align-items: center; gap: 24px; padding-right: 6px; }
.brand { font: 800 13px/16px "Open Sans", "Noto Sans", sans-serif; }
.window-buttons { display: flex; gap: 10px; }

.tab-row { display: flex; justify-content: space-between; height: 30px; }
.tabs { display: flex; font-size: 13px; line-height: 28px; }
.tabs a { padding: 0 16px; height: 28px; color: #fff; text-decoration: none; white-space: nowrap; }
.tabs .file { width: 86px; padding: 0 20px; }
.tabs .active { color: #ffcf4a; border-bottom: 2px solid #ffcf4a; }

.search-side { display: flex; align-items: center; gap: 10px; padding-right: 5px; }
.search { display: flex; align-items: center; width: 178px; height: 22px; padding-right: 2px; background: #fff; border: 1px solid #777; }
.search input { flex: 1; min-width: 0; border: 0; padding: 0; background: none; font: 12px/18px "Noto Sans", "Noto Sans CJK SC", sans-serif; }
.search input::placeholder { color: #a0a0a0; opacity: 1; }

/* Ribbon */
.ribbon { display: flex; height: 94px; border-bottom: 1px solid #d6d6d6; position: relative; }
.group { position: relative; display: flex; flex-direction: column; padding-left: 8px; padding-right: 1px; }
.group::after { content: ""; position: absolute; right: 0; top: 5px; bottom: 4px; width: 1px; background: #dadada; }
.items { display: flex; height: 76px; }
.group footer { position: relative; padding-right: 16px; margin-left: -8px; text-align: center; color: #00658a; }
.group footer .caret { position: absolute; right: 8px; top: 6px; }
.g-build { width: 109px; padding-left: 9px; }

.big { flex-direction: column; padding: 5px 4px 0; }
.big > span { margin-top: 4px; line-height: 16px; }
.big > .caret { margin-top: 4px; }
.big.short { min-width: 40px; }
.big.more { width: 46px; margin-left: 4px; }

.curves { display: grid; grid-template-columns: 24px 24px; column-gap: 9px; row-gap: 11px; padding: 9px 5px 0 4px; align-content: start; }

.list { display: flex; flex-direction: column; }
.list button { gap: 4px; }
.list.three { padding: 1px 5px 0 8px; }
.list.three button { height: 23px; }
.list.two { padding: 4px 3px 0 7px; }
.list.two button { height: 35px; }
.g-edit .list.two { padding-left: 4px; padding-right: 10px; }
.g-edit .list.wide { padding: 4px 3px 0 0; }
.list.wide button { gap: 5px; }
.ribbon-end { position: absolute; right: 5px; bottom: 8px; }

/* Selection bar */
.toolbar { display: flex; align-items: center; height: 28px; border-bottom: 1px solid #aaa; padding: 0 5px 0 13px; }
.menu { width: 76px; gap: 8px; }
.vsep { width: 1px; height: 20px; background: #d6d6d6; }
.vsep.end { margin-left: 7px; }
.select { position: relative; height: 22px; border: 1px solid #777; background: #fff; }
.select::after { content: ""; position: absolute; right: 4px; top: 9px; border: 4px solid transparent; border-top-color: #111; border-bottom: 0; pointer-events: none; }
.select select { width: 100%; height: 20px; padding: 0 14px 0 2px; border: 0; background: none; appearance: none; color: inherit; font: inherit; }
.s1 { width: 149px; margin-left: 12px; }
.s2 { width: 156px; }
.s3 { width: 128px; margin: 0 6px 0 5px; }
.funnel { width: 34px; padding-left: 9px; }
.tool { width: 25px; height: 22px; justify-content: center; }
.tool.on { width: 24px; background: #cbe6ea; }
.tool.first { margin-left: 5px; }
.tool + .caret { margin: 0 4px; }
.tool.off { opacity: .45; }
.last { margin-left: auto; }

/* Workspace */
.workspace { flex: 1; display: grid; grid-template-columns: 37px 377px minmax(0, 1fr); }

.rail { display: flex; flex-direction: column; background: #dcdcdc; border-right: 1px solid #aaa; padding-left: 3px; }
.rail button { height: 44px; padding-left: 4px; border: 1px solid transparent; border-right: 0; }
.rail .gear { height: 32px; padding-left: 5px; }
.rail .current { background: #fff; border-color: #aaa; margin-right: -1px; }

.panel { display: flex; flex-direction: column; padding: 0 9px 5px 8px; }
.panel-title { display: flex; align-items: center; gap: 4px; height: 27px; margin-left: -2px; padding: 0 2px 2px 0; }
.panel-title h2 { flex: 1; margin: 0; font-size: 12px; font-weight: 400; }
.panel-title button { width: 12px; height: 11px; border: 1px solid #000; border-top-width: 2px; }

.tree { flex: 1; display: flex; flex-direction: column; border: 1px solid #d4d4d4; font-size: 12px; }
table { width: 100%; table-layout: fixed; border-collapse: separate; border-spacing: 0; }
.c-name { width: 200px; }
.c-mark { width: 24px; }
.c-note { width: 100px; }
th { height: 21px; padding: 0 6px; background: #f0f0f0; border-right: 1px solid #d8d8d8; border-bottom: 1px solid #d0d0d0; font-weight: 400; text-align: left; white-space: nowrap; }
th:last-child, td:last-child { border-right: 0; padding: 0; }
.sort { display: inline-block; margin: 0 0 2px 18px; }
td { height: 20px; padding: 0; border-right: 1px solid #e8e8e8; border-bottom: 1px solid #e8e8e8; line-height: 18px; }
td > svg { margin: 0 auto; }
tbody tr:nth-child(even) { background: #f9f9f9; }
.node { display: flex; align-items: center; height: 19px; white-space: nowrap; padding-left: 1px; }
.node.child { padding-left: 28px; }
.node span { margin-left: 3px; }
.hidden-item .node span { color: #9a9a9a; }
.work .node span { font-weight: 700; }

.blank-rows {
  flex: 1;
  background:
    linear-gradient(#e8e8e8, #e8e8e8) 199px 0 / 1px 100% no-repeat,
    linear-gradient(#e8e8e8, #e8e8e8) 223px 0 / 1px 100% no-repeat,
    linear-gradient(#e8e8e8, #e8e8e8) 247px 0 / 1px 100% no-repeat,
    linear-gradient(#e8e8e8, #e8e8e8) 347px 0 / 1px 100% no-repeat,
    repeating-linear-gradient(#f9f9f9 0 19px, #e8e8e8 19px 20px, #fff 20px 39px, #e8e8e8 39px 40px);
}

.splitter { height: 6px; margin-top: 2px; background: #dcdcdc; border: 1px solid #aaa; }

.sections { display: flex; flex-direction: column; padding-top: 2px; }
.sections button { height: 24px; padding-left: 11px; gap: 9px; border-bottom: 2px solid #d2d2d2; color: #00658a; font-size: 14px; line-height: 20px; }
.sections button::before { content: ""; border: 4px solid transparent; border-left-color: #00658a; border-right: 0; }

.viewport { border-left: 1px solid #aaa; }
.doc-tabs { display: flex; height: 27px; border-bottom: 2px solid #005f87; }
.doc-tab { padding: 0 6px 0 7px; gap: 3px; background: #005f87; color: #fff; font-size: 12px; }
.doc-tab span { margin-right: 4px; }
.scene { width: 100%; }
.axis-label { font: 12px "Liberation Sans", sans-serif; text-anchor: middle; }
.light-label { fill: #e6e6e6; }

.status { height: 22px; border-top: 1px solid #aaa; padding-right: 5px; text-align: right; color: #666; font: 13px/14px "Liberation Mono", monospace; }
.status b { font: 400 16px/14px "Noto Sans CJK SC", sans-serif; }
```
